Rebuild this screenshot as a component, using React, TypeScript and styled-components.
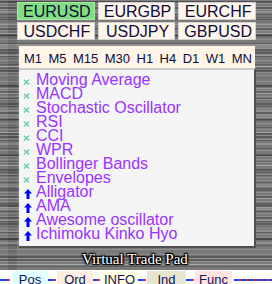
import React from "react";
import styled, { createGlobalStyle } from "styled-components";

const Global = createGlobalStyle`
  html, body { margin: 0; padding: 0; background: #777777; }
  #root { width: 272px; height: 284px; overflow: hidden; }
`;

const Root = styled.div`
  width: 272px;
  height: 284px;
  display: flex;
  flex-direction: column;
  background-color: #7a7a7a;
  background-image:
    repeating-linear-gradient(180deg, rgba(255,255,255,0.16) 0 1px, transparent 1px 3px),
    repeating-linear-gradient(180deg, rgba(0,0,0,0.22) 0 2px, transparent 2px 7px),
    repeating-linear-gradient(180deg, rgba(255,255,255,0.2) 0 1px, transparent 1px 11px),
    repeating-linear-gradient(180deg, rgba(0,0,0,0.25) 0 3px, transparent 3px 17px),
    repeating-linear-gradient(180deg, rgba(255,255,255,0.12) 0 2px, transparent 2px 23px),
    linear-gradient(to right, rgba(0,0,0,0) 0 8px, rgba(0,0,0,0.12) 8px 17px, rgba(0,0,0,0) 17px);
  font-family: "Liberation Sans", Arial, sans-serif;
`;

const Main = styled.div`
  padding: 2px 16px 0 17px;
  display: flex;
  flex-direction: column;
`;

const PairGrid = styled.div`
  display: grid;
  grid-template-columns: repeat(3, 1fr);
  grid-auto-rows: 18px;
  column-gap: 3px;
  row-gap: 2px;
`;

const PairButton = styled.div<{ $active?: boolean }>`
  box-sizing: border-box;
  border: 1px solid ${(p) => (p.$active ? "#a8e8a8" : "#d0d0d0")};
  background: ${(p) => (p.$active ? "#7fdf7f" : "#fff5e8")};
  color: #0c0c40;
  font-size: 16px;
  line-height: 17px;
  text-align: center;
  padding-left: 2px;
  white-space: nowrap;
  overflow: hidden;
`;

const TimeframeBar = styled.div`
  margin: 6px 1px 0 2px;
  height: 22px;
  box-sizing: border-box;
  padding: 3px 3px 0 5px;
  background: #fff5e6;
  display: flex;
  justify-content: space-between;
  font-size: 13px;
  line-height: 19px;
  color: #0c0c40;
`;

const Panel = styled.div`
  margin-left: 2px;
  height: 180px;
  box-sizing: border-box;
  background: #f5f5f5;
  border-top: 2px solid #c8c8c8;
  border-right: 2px solid #505050;
  border-bottom: 2px solid #505050;
  padding-top: 3px;
  display: flex;
  flex-direction: column;
`;

const Row = styled.div`
  height: 14px;
  display: flex;
  align-items: stretch;
`;

const IconCell = styled.div<{ $kind: "x" | "up" }>`
  width: 17px;
  flex: none;
  display: flex;
  align-items: ${(p) => (p.$kind === "x" ? "center" : "flex-end")};
  padding-left: ${(p) => (p.$kind === "x" ? "4px" : "5px")};
  padding-top: ${(p) => (p.$kind === "x" ? "3px" : "0")};
  box-sizing: border-box;
`;

const Label = styled.span`
  font-size: 16px;
  line-height: 14px;
  color: #9933ff;
  white-space: nowrap;
`;

const Title = styled.div`
  height: 22px;
  display: flex;
  align-items: center;
  justify-content: center;
  font-family: "Liberation Serif", "Times New Roman", serif;
  font-size: 15px;
  color: #ffffff;
  text-shadow: 0 0 2px #000, 0 0 3px #000, 1px 1px 1px #000, -1px -1px 1px #000, 1px -1px 1px #000, -1px 1px 1px #000;
  padding-right: 2px;
`;

const TabStrip = styled.div`
  height: 14px;
  background: #ffffff;
  display: flex;
  align-items: stretch;
`;

const Connector = styled.div<{ $w: number }>`
  width: ${(p) => p.$w}px;
  flex: none;
  height: 2px;
  align-self: flex-end;
  margin-bottom: 3px;
  background: linear-gradient(to right, #1f3fff 0 55%, #ff2020 55% 85%, transparent 85%);
`;

const TailLine = styled.div`
  flex: 1;
  height: 2px;
  align-self: flex-end;
  margin-bottom: 3px;
  margin-left: 2px;
  background: repeating-linear-gradient(to right, #1f3fff 0 5px, #ff2020 5px 7px);
`;

const Tab = styled.div<{ $bg: string; $w: number }>`
  width: ${(p) => p.$w}px;
  flex: none;
  margin-top: 1px;
  background: ${(p) => p.$bg};
  color: #13135a;
  font-size: 13px;
  line-height: 13px;
  padding-top: 2px;
  text-align: center;
  box-sizing: border-box;
`;

const XIcon = () => (
  <svg width="7" height="6" viewBox="0 0 7 6">
    <path d="M1 0.8 Q3.5 3 6 5.4 M6 0.6 Q3.5 3 1 5.4" stroke="#5fcf9a" strokeWidth="1.4" fill="none" />
  </svg>
);

const UpIcon = () => (
  <svg width="8" height="10" viewBox="0 0 8 10">
    <path d="M4 0 L8 4.5 L5.5 4.5 L5.5 10 L2.5 10 L2.5 4.5 L0 4.5 Z" fill="#0000ff" />
  </svg>
);

const pairs = ["EURUSD", "EURGBP", "EURCHF", "USDCHF", "USDJPY", "GBPUSD"];
const frames = ["M1", "M5", "M15", "M30", "H1", "H4", "D1", "W1", "MN"];
const indicators: { name: string; kind: "x" | "up" }[] = [
  { name: "Moving Average", kind: "x" },
  { name: "MACD", kind: "x" },
  { name: "Stochastic Oscillator", kind: "x" },
  { name: "RSI", kind: "x" },
  { name: "CCI", kind: "x" },
  { name: "WPR", kind: "x" },
  { name: "Bollinger Bands", kind: "x" },
  { name: "Envelopes", kind: "x" },
  { name: "Alligator", kind: "up" },
  { name: "AMA", kind: "up" },
  { name: "Awesome oscillator", kind: "up" },
  { name: "Ichimoku Kinko Hyo", kind: "up" },
];
const tabs = [
  { label: "Pos", bg: "#e0ffff", w: 36 },
  { label: "Ord", bg: "#fdeee0", w: 36 },
  { label: "INFO", bg: "#ffffe0", w: 37 },
  { label: "Ind", bg: "#e6e6cf", w: 39 },
  { label: "Func", bg: "#ffe4e1", w: 37 },
];
const connectorWidths = [12, 9, 8, 9, 9];

export default function App() {
  return (
    <>
      <Global />
      <Root>
        <Main>
          <PairGrid>
            {pairs.map((p, i) => (
              <PairButton key={p} $active={i === 0}>
                {p}
              </PairButton>
            ))}
          </PairGrid>
          <TimeframeBar>
            {frames.map((f) => (
              <span key={f}>{f}</span>
            ))}
          </TimeframeBar>
          <Panel>
            {indicators.map((ind) => (
              <Row key={ind.name}>
                <IconCell $kind={ind.kind}>{ind.kind === "x" ? <XIcon /> : <UpIcon />}</IconCell>
                <Label>{ind.name}</Label>
              </Row>
            ))}
          </Panel>
        </Main>
        <Title>Virtual Trade Pad</Title>
        <TabStrip>
          {tabs.map((t, i) => (
            <React.Fragment key={t.label}>
              <Connector $w={connectorWidths[i]} />
              <Tab $bg={t.bg} $w={t.w}>
                {t.label}
              </Tab>
            </React.Fragment>
          ))}
          <TailLine />
        </TabStrip>
      </Root>
    </>
  );
}
